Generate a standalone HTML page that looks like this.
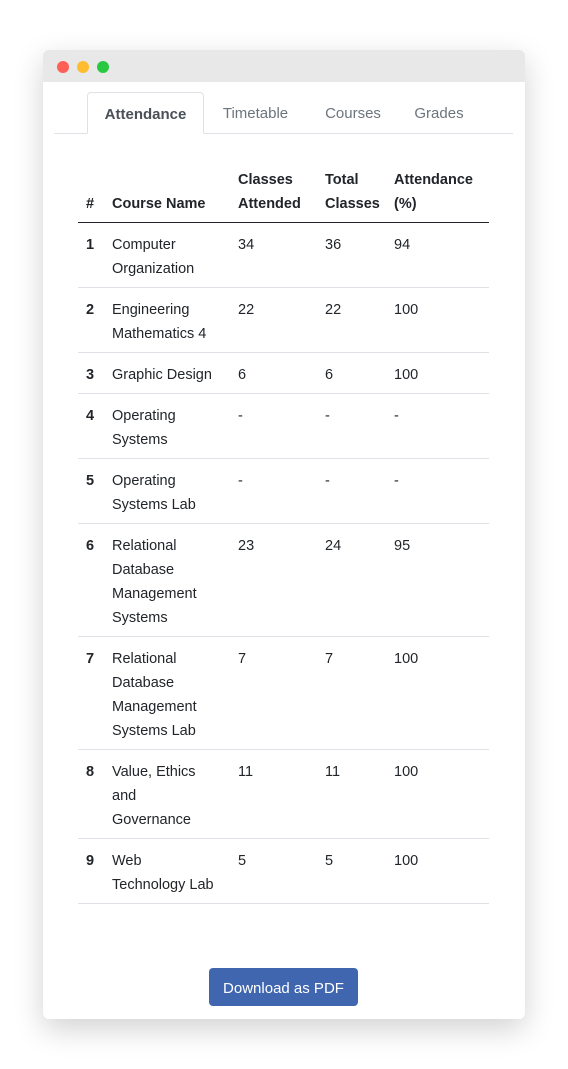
<!DOCTYPE html>
<html><head><meta charset="utf-8"><style>
*{margin:0;padding:0;box-sizing:border-box}
body{width:568px;height:1069px;background:#fff;font-family:"Liberation Sans",sans-serif;color:#212529;position:relative;overflow:hidden}
.win{position:absolute;left:43px;top:50px;width:482px;height:969px;background:#fff;border-radius:6px;box-shadow:0 10px 30px rgba(0,0,0,.18);overflow:hidden}
.bar{height:32px;background:#e8e8e8}
.dot{position:absolute;top:11px;width:12px;height:12px;border-radius:50%}
.tabline{position:absolute;left:11px;right:12px;top:83px;border-top:1px solid #dee2e6}
.tab{position:absolute;top:42px;height:42px;line-height:44px;font-size:15px;color:#6c757d;text-align:center}
.tab.a{left:44px;width:117px;border:1px solid #dee2e6;border-bottom:1px solid #fff;border-radius:4px 4px 0 0;background:#fff;color:#495057;font-weight:bold}
.r{position:absolute;left:35px;width:411px;border-bottom:1px solid #dee2e6;font-size:14.5px;line-height:24px}
.r span{position:absolute;top:11px;white-space:nowrap}
.c0{left:8px;font-weight:bold}.c1{left:34px}.c2{left:160px}.c3{left:247px}.c4{left:316px}
.h{border-bottom:1px solid #212529;font-weight:bold}
.h span{top:auto;bottom:6px}
.btn{position:absolute;left:166px;top:918px;width:149px;height:38px;background:#4066b0;border-radius:4px;color:#fff;font-size:15px;line-height:41px;text-align:center}
</style></head><body>
<div class="win">
<div class="bar"></div>
<div class="dot" style="left:14px;background:#fe5f57"></div>
<div class="dot" style="left:34px;background:#febc2e"></div>
<div class="dot" style="left:54px;background:#28c840"></div>
<div class="tabline"></div>
<div class="tab a">Attendance</div>
<div class="tab" style="left:170px;width:85px">Timetable</div>
<div class="tab" style="left:273px;width:74px">Courses</div>
<div class="tab" style="left:363px;width:66px">Grades</div>

<div class="r h" style="top:100px;height:73px"><span class="c0">#</span><span class="c1">Course Name</span><span class="c2">Classes<br>Attended</span><span class="c3">Total<br>Classes</span><span class="c4">Attendance<br>(%)</span></div>
<div class="r" style="top:172px;height:66px"><span class="c0">1</span><span class="c1">Computer<br>Organization</span><span class="c2">34</span><span class="c3">36</span><span class="c4">94</span></div>
<div class="r" style="top:237px;height:66px"><span class="c0">2</span><span class="c1">Engineering<br>Mathematics 4</span><span class="c2">22</span><span class="c3">22</span><span class="c4">100</span></div>
<div class="r" style="top:302px;height:42px"><span class="c0">3</span><span class="c1">Graphic Design</span><span class="c2">6</span><span class="c3">6</span><span class="c4">100</span></div>
<div class="r" style="top:343px;height:66px"><span class="c0">4</span><span class="c1">Operating<br>Systems</span><span class="c2">-</span><span class="c3">-</span><span class="c4">-</span></div>
<div class="r" style="top:408px;height:66px"><span class="c0">5</span><span class="c1">Operating<br>Systems Lab</span><span class="c2">-</span><span class="c3">-</span><span class="c4">-</span></div>
<div class="r" style="top:473px;height:114px"><span class="c0">6</span><span class="c1">Relational<br>Database<br>Management<br>Systems</span><span class="c2">23</span><span class="c3">24</span><span class="c4">95</span></div>
<div class="r" style="top:586px;height:114px"><span class="c0">7</span><span class="c1">Relational<br>Database<br>Management<br>Systems Lab</span><span class="c2">7</span><span class="c3">7</span><span class="c4">100</span></div>
<div class="r" style="top:699px;height:90px"><span class="c0">8</span><span class="c1">Value, Ethics<br>and<br>Governance</span><span class="c2">11</span><span class="c3">11</span><span class="c4">100</span></div>
<div class="r" style="top:788px;height:66px"><span class="c0">9</span><span class="c1">Web<br>Technology Lab</span><span class="c2">5</span><span class="c3">5</span><span class="c4">100</span></div>

<div class="btn">Download as PDF</div>
</div>
</body></html>
